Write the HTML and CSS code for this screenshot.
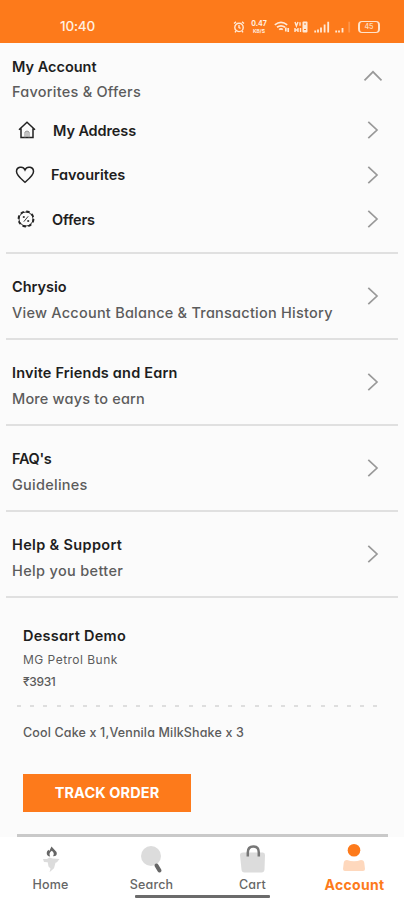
FILE: index.html
```html
<!DOCTYPE html>
<html lang="en">
<head>
<meta charset="utf-8">
<title>Account</title>
<link rel="stylesheet" href="styles.css">
</head>
<body>
<svg class="defs" aria-hidden="true">
  <symbol id="chevron" viewBox="0 0 12 20"><path d="M1.3 1.8 10 10 1.3 18.2"/></symbol>
</svg>
<div class="screen">
  <header class="status">
    <span class="time">10:40</span>
    <div class="status-icons">
      <svg class="alarm" width="12" height="12" viewBox="0 0 12 12"><circle cx="6" cy="6.4" r="4.2"/><path d="M6 4v2.6l1.5.7M1 2.5 3 .9M11 2.5 9 .9M3 10l-1 1.4M9 10l1 1.4"/></svg>
      <span class="rate"><b>0.47</b><b>KB/S</b></span>
      <svg class="wifi" width="16" height="12" viewBox="0 0 16 12"><path d="M.8 3.8Q7 -1 13.2 3.8M3 6.3q4-3 8 0M5.2 8.7q1.8-1.5 3.6 0"/><path d="M11.800 6.500v4M14.200 11v-4"/></svg>
      <svg class="volte" width="14" height="12" viewBox="0 0 14 12"><path d="M1 1l1.400 4L4 1M6 1.200v3.600M1 7v4M1 9h3M4 7v4M6.500 7v4"/><rect x="8.500" y=".5" width="5" height="11" rx="1"/><path class="cut" d="M10 3h2M10 8.500h2"/></svg>
      <svg class="signal" width="16" height="12" viewBox="0 0 16 12"><path d="M1.200 9.500V11.500M4 8.500v3M7 6.500v5M10.600 3.500v8M14.200.7v10.800"/></svg>
      <svg class="signal weak" width="16" height="12" viewBox="0 0 16 12"><path d="M1.200 9.500v2M4 9.500v2M7.500 7v4.500"/><path class="faint" d="M14.200.7v10.800"/></svg>
      <span class="battery">45</span>
    </div>
  </header>

  <main>
    <section class="account">
      <div class="account-head">
        <div><h2 class="t-account">My Account</h2><p class="t-favorites">Favorites &amp; Offers</p></div>
        <svg class="up" width="20" height="12" viewBox="0 0 20 12"><path d="M1.500 10.300 10 1.800l8.500 8.500"/></svg>
      </div>
      <a class="row address">
        <svg class="icon" width="20" height="20" viewBox="0 0 20 20"><path d="M2 9.800 10 2.200l8 7.600M4 8.500v9h12v-9"/><path class="soft" d="M8 17.500v-5.500q2-2 4 0v5.500M10 12v5"/></svg>
        <span>My Address</span><svg class="chev"><use href="#chevron"/></svg>
      </a>
      <a class="row favourites">
        <svg class="icon" width="20" height="20" viewBox="0 0 20 20"><path d="M10 17.300C7 14.500 1.500 10.500 1.500 6.500c0-4.600 6.500-6 8.500-1.500 2-4.500 8.500-3.100 8.500 1.500 0 4-5.500 8-8.500 10.800Z"/></svg>
        <span>Favourites</span><svg class="chev"><use href="#chevron"/></svg>
      </a>
      <a class="row offers">
        <svg class="icon" width="20" height="20" viewBox="0 0 20 20"><circle class="ring" cx="10" cy="10" r="7.500"/><circle class="thin" cx="10" cy="10" r="7"/><path class="thin" d="m7.800 12.700 4.400-5.400"/><circle class="dot" cx="7.800" cy="8" r="1.100"/><circle class="dot" cx="12.200" cy="12" r="1.100"/></svg>
        <span>Offers</span><svg class="chev"><use href="#chevron"/></svg>
      </a>
    </section>

    <section class="card"><div><h2 class="t-chrysio">Chrysio</h2><p class="t-view">View Account Balance &amp; Transaction History</p></div><svg class="chev"><use href="#chevron"/></svg></section>
    <section class="card"><div><h2 class="t-invite">Invite Friends and Earn</h2><p class="t-more">More ways to earn</p></div><svg class="chev"><use href="#chevron"/></svg></section>
    <section class="card"><div><h2 class="t-faq">FAQ's</h2><p class="t-guide">Guidelines</p></div><svg class="chev"><use href="#chevron"/></svg></section>
    <section class="card"><div><h2 class="t-help">Help &amp; Support</h2><p class="t-better">Help you better</p></div><svg class="chev"><use href="#chevron"/></svg></section>

    <section class="order">
      <h2 class="t-shop">Dessart Demo</h2>
      <p class="t-place">MG Petrol Bunk</p>
      <p class="t-price">₹3931</p>
      <div class="dashes"></div>
      <p class="items">Cool Cake x 1,Vennila MilkShake x 3</p>
      <button>TRACK ORDER</button>
    </section>
    <div class="end"></div>
  </main>

  <nav>
    <a class="home"><svg width="28" height="30" viewBox="0 0 28 30"><path class="dark" d="M14.500 2.500 19.500 8q1 3-1.500 4l-2 .3q2-3.200-1.200-5.500-3.600 2.600-1.600 5.700-3.400-.3-3.500-3.500 0-2 1.800-3.200l.8 1.200Z"/><path class="light" d="M6 15h4l2.500-1.500 3 1L22.500 15l-2.500 3.300-1.500.4-1.500 5.500-4.500 4 1-3.700-2-2-.8-4.300L7 18Z"/></svg><span>Home</span></a>
    <a class="search"><svg width="28" height="30" viewBox="0 0 28 30"><circle class="light" cx="13" cy="12" r="10"/><path class="handle" d="m18.500 21.500 3 5"/></svg><span>Search</span></a>
    <a class="cart"><svg width="28" height="30" viewBox="0 0 28 30"><path class="light" d="M4 8.500h20q2 0 2 2.500L25.500 25.500q-.2 3-3 3h-17q-2.800 0-3-3L1 11Q1 8.500 4 8.500Z"/><path class="loop" d="M8.800 12.500V8.500q0-6 5.500-6t5.500 6v4"/></svg><span>Cart</span></a>
    <a class="user"><svg width="28" height="30" viewBox="0 0 28 30"><circle class="head" cx="14" cy="6.300" r="6.300"/><path class="body" d="M7 16q7 2.500 14 0 3 0 3.300 3l.7 6q0 2-2 2H5q-2 0-2-2l.7-6Q4 16 7 16Z"/></svg><span>Account</span></a>
    <i class="gesture"></i>
  </nav>
</div>
</body>
</html>
```
FILE: styles.css
```css
* { box-sizing: border-box; }
body, h2, p { margin: 0; }
body { font-family: Inter, "Noto Sans", sans-serif; font-feature-settings: "cv11"; background: #fbfbfb; color: #1e1e1e; }
.defs { position: absolute; width: 0; height: 0; }
svg { fill: none; flex: none; display: block; }
.screen { width: 404px; height: 900px; overflow: hidden; display: flex; flex-direction: column; }
main { flex: none; height: 794px; }

.status { height: 43px; flex: none; background: #fd7a1b; color: #fff0e2; display: flex; justify-content: space-between; padding: 10px 24px 0 60px; }
.time { font-size: 13.500px; line-height: 33px; font-weight: 500; letter-spacing: -.2px; }
.status-icons { display: flex; align-items: center; height: 33px; }
.status-icons svg { stroke: #ffe9d6; stroke-width: 1.400; }
.status-icons .alarm { margin-right: 4px; }
.rate { width: 20px; display: flex; flex-direction: column; align-items: center; font-size: 7px; line-height: 8px; margin-right: 5px; }
.rate b + b { font-size: 5px; line-height: 6px; }
.status-icons .wifi { margin-right: 4px; stroke-width: 1.700; }
.status-icons .volte { margin-right: 6px; }
.volte rect { fill: #ffe9d6; stroke: none; }
.volte .cut { stroke: #fd7a1b; stroke-width: 1; }
.status-icons .signal { margin-right: 5px; stroke-width: 1.800; }
.status-icons .weak { margin-right: 7px; }
.faint { opacity: .25; }
.battery { width: 22px; height: 12px; border: 1.500px solid #ffe3cb; border-width: 1.500px 2px; border-radius: 4px; font-size: 7px; line-height: 10px; text-align: center; font-weight: 600; color: #ffd9b8; }

h2 { font-size: 14.500px; font-weight: 600; line-height: 25.500px; white-space: nowrap; }
p { font-size: 14.500px; font-weight: 450; line-height: 25.500px; color: #5c5c5c; white-space: nowrap; }
.t-favorites, .t-view { letter-spacing: .24px; }
.t-guide { letter-spacing: .26px; }
.t-invite, .t-more { letter-spacing: .18px; }
.t-faq { letter-spacing: -.3px; }
.t-help, .t-better { letter-spacing: .34px; }
.t-shop { letter-spacing: .27px; }
.chev { width: 12px; height: 20px; stroke: #999; stroke-width: 1.700; }

.account { height: 209px; padding: 11px 0 0 12px; }
.account-head { display: flex; justify-content: space-between; height: 54px; padding-right: 21px; }
.t-favorites { margin-top: -.5px; }
.up { margin-top: 16px; stroke: #999; stroke-width: 1.700; }
.row { display: flex; align-items: center; height: 44.500px; padding: 0 25px 0 3px; font-size: 14.500px; font-weight: 600; }
.row span { flex: 1; }
.icon { stroke: #222; stroke-width: 1.500; }
.address .icon { margin: 0 16px 0 2px; }
.address span { letter-spacing: -.1px; }
.favourites .icon { margin-right: 16px; }
.offers .icon { margin: 0 16px 0 1px; }
.offers span { letter-spacing: -.15px; }
.soft { stroke: #888; stroke-width: 1; }
.ring { stroke-dasharray: 3.500 2.390; stroke-width: 1.800; }
.thin { stroke-width: .9; }
.dot { fill: #333; stroke: none; }

.card { height: 86px; margin: 0 6px; padding: 20px 19px 0 6px; border-top: 2px solid #e0e0e0; display: flex; justify-content: space-between; }
.card .chev { margin-top: 12px; }

.order { height: 238px; margin: 0 6px; border-top: 2px solid #e0e0e0; padding: 25px 11px 0 17px; }
.t-place { font-size: 12px; line-height: 22px; font-weight: 400; letter-spacing: .48px; }
.t-price { font-size: 12px; line-height: 22px; letter-spacing: -.35px; }
.dashes { height: 2px; margin: 12px 0 0 -6px; background: repeating-linear-gradient(90deg, #dedede 0 4px, transparent 4px 13.200px); }
.items { font-size: 12.500px; line-height: 25px; margin-top: 13px; letter-spacing: .15px; }
button { display: block; width: 168px; height: 38px; margin: 29px 0 0; padding: 0; border: 0; background: #fd7a1b; color: #fff; font: 700 14.500px Inter, sans-serif; letter-spacing: .1px; }
.end { height: 3px; margin: 0 16px 0 17px; background: #c9c9c9; }

nav { flex: none; height: 63px; background: #fff; display: grid; grid-template-columns: repeat(4, 101px); position: relative; }
nav a { display: flex; flex-direction: column; align-items: center; padding-top: 7px; font-size: 12.500px; font-weight: 500; color: #666; letter-spacing: .2px; }
nav span { line-height: 21px; }
nav .user { color: #fd7a1b; font-size: 14px; font-weight: 700; letter-spacing: .3px; padding-left: 2px; }
nav .user svg { margin-left: -2px; }
.light { fill: #dcdcdc; }
.dark { fill: #666; }
.handle { stroke: #666; stroke-width: 4; stroke-linecap: round; }
.loop { stroke: #777; stroke-width: 2.500; }
.head { fill: #fd7a1b; }
.body { fill: #fed8bd; }
.gesture { position: absolute; left: 135px; bottom: 2px; width: 135px; height: 3px; background: #6b6b6b; border-radius: 1px; }
```
